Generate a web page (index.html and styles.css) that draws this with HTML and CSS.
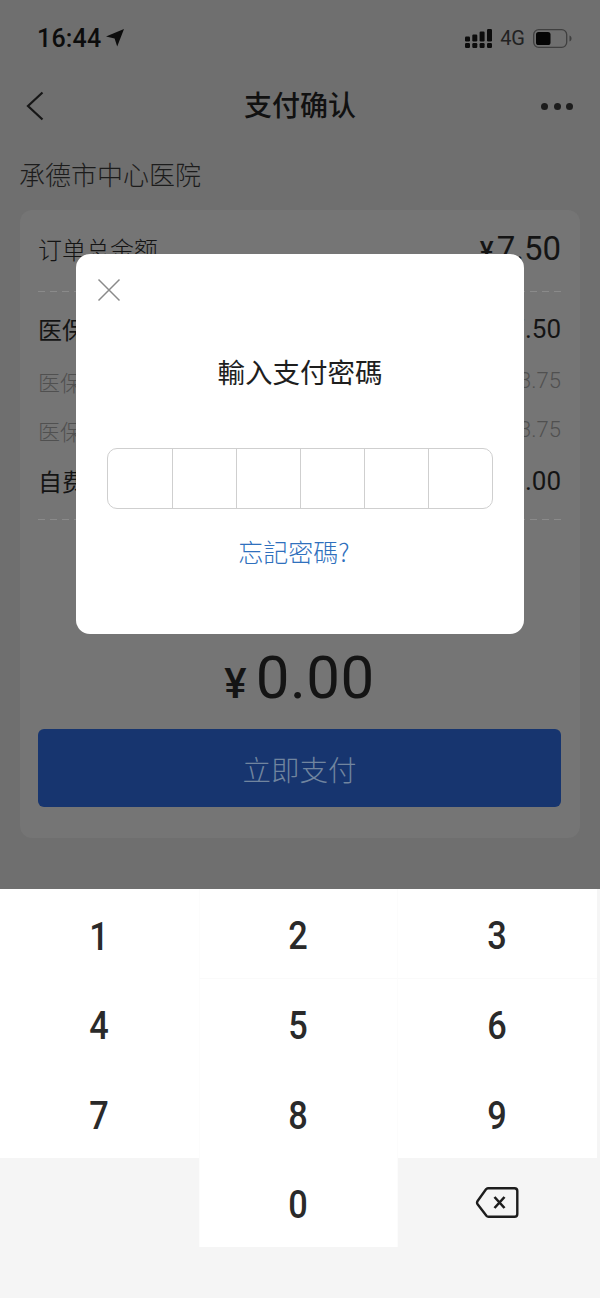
FILE: index.html
```html
<!DOCTYPE html>
<html lang="zh">
<head>
<meta charset="utf-8">
<title>支付确认</title>
<link rel="stylesheet" href="styles.css">
</head>
<body>
<div class="page">
  <header class="status">
    <div class="status-left">
      <span class="time">16:44</span>
      <svg class="arrow" viewBox="0 0 18 18" width="18" height="18"><path d="M18 0 11.200 17.500 8.600 9.600 0 7.400Z"/></svg>
    </div>
    <div class="status-right">
      <svg class="signal" viewBox="0 0 27 19" width="27" height="19">
        <g fill="#0c0c0c">
          <rect x="0" y="14" width="5" height="5" rx="1.200"/><rect x="0" y="7.500" width="5" height="5" rx="1.200"/>
          <rect x="7.300" y="14" width="5" height="5" rx="1.200"/><rect x="7.300" y="5.500" width="5" height="7" rx="1.200"/>
          <rect x="14.600" y="14" width="5" height="5" rx="1.200"/><rect x="14.600" y="2.500" width="5" height="10" rx="1.200"/>
          <rect x="22" y="14" width="5" height="5" rx="1.200"/><rect x="22" y="0" width="5" height="12.500" rx="1.200"/>
        </g>
      </svg>
      <span class="network">4G</span>
      <svg class="battery" viewBox="0 0 39 19" width="39" height="19">
        <rect x="0.700" y="0.700" width="33" height="17.600" rx="5" fill="none" stroke="#3f3f3f" stroke-width="1.300"/>
        <rect x="3" y="3" width="14.500" height="13" rx="2.600" fill="#050505"/>
        <path d="M36.500 6.500c1.500.6 2 1.800 2 3s-.5 2.400-2 3z" fill="#3f3f3f"/>
      </svg>
    </div>
  </header>

  <nav class="nav">
    <svg class="back" viewBox="0 0 18 30" width="18" height="30"><path d="M16.500 1.500 2 15l14.500 13.500" fill="none" stroke="#161616" stroke-width="2.200"/></svg>
    <h1 class="nav-title">支付确认</h1>
    <div class="more"><i></i><i></i><i></i></div>
  </nav>

  <div class="hospital">承德市中心医院</div>

  <section class="card">
    <div class="total"><span>订单总金额</span><span class="total-value"><small class="total-sign">¥</small>7.50</span></div>
    <div class="breakdown">
      <div class="row row-main"><span>医保支付</span><span class="num">¥7.50</span></div>
      <div class="row row-sub"><span>医保统筹</span><span class="num">¥3.75</span></div>
      <div class="row row-sub"><span>医保个账</span><span class="num">¥3.75</span></div>
      <div class="row row-main"><span>自费金额</span><span class="num">¥0.00</span></div>
    </div>
    <div class="due"><span class="due-sign">¥</span><span class="due-value">0.00</span></div>
    <button class="pay">立即支付</button>
  </section>

  <div class="modal">
    <svg class="close" viewBox="0 0 24 24" width="24" height="24"><path d="M1.500 1.500 22.500 22.500M22.500 1.500 1.500 22.500" stroke="#8a8a8a" stroke-width="1.500" fill="none"/></svg>
    <h2 class="modal-title">輸入支付密碼</h2>
    <div class="pin"><span></span><span></span><span></span><span></span><span></span><span></span></div>
    <a class="forgot">忘記密碼?</a>
  </div>

  <div class="keypad">
    <button class="key"><span>1</span></button>
    <button class="key key-mid key-top"><span>2</span></button>
    <button class="key key-top"><span>3</span></button>
    <button class="key"><span>4</span></button>
    <button class="key key-mid"><span>5</span></button>
    <button class="key"><span>6</span></button>
    <button class="key"><span>7</span></button>
    <button class="key key-mid"><span>8</span></button>
    <button class="key"><span>9</span></button>
    <div class="key-blank"></div>
    <button class="key key-mid"><span>0</span></button>
    <button class="key-del">
      <svg viewBox="0 0 44 33" width="44" height="33">
        <path d="M13 2.200H39.500A2.800 2.800 0 0 1 42.300 5V28A2.800 2.800 0 0 1 39.500 30.800H13.500A2.800 2.800 0 0 1 11.400 29.800L2.600 18.200A2.800 2.800 0 0 1 2.600 15L11 3.200A2.800 2.800 0 0 1 13 2.200Z" fill="none" stroke="#1d1d1d" stroke-width="2.400"/>
        <path d="M19.500 11 29.500 22M29.500 11 19.500 22" stroke="#1d1d1d" stroke-width="2.600" fill="none"/>
      </svg>
    </button>
  </div>
</div>
</body>
</html>
```

FILE: styles.css
```css
* { box-sizing: border-box; }

html, body { margin: 0; padding: 0; }

body {
  font-family: "Noto Sans CJK SC", "Noto Sans", sans-serif;
  color: #141414;
  background: #6f6f6f;
}

.page {
  position: relative;
  width: 600px;
  height: 1298px;
  overflow: hidden;
  background: #6f6f6f;
}

/* status bar */
.status {
  height: 76px;
  padding: 0 28px 0 37px;
  display: flex;
  justify-content: space-between;
  align-items: center;
}

.status-left, .status-right { display: flex; align-items: center; }

.time {
  font: 500 25px/1 Roboto, sans-serif;
  color: #0c0c0c;
  letter-spacing: .2px;
}

.arrow { margin-left: 5px; fill: #0c0c0c; }

.signal { margin-right: 8px; }

.network {
  margin-right: 8px;
  font: 400 20px/1 Roboto, sans-serif;
  color: #222;
}

/* navigation bar */
.nav {
  height: 60px;
  padding: 0 27px 0 26px;
  display: flex;
  align-items: center;
  justify-content: space-between;
  position: relative;
}

.nav-title {
  position: absolute;
  left: 0;
  right: 0;
  top: -2px;
  margin: 0;
  text-align: center;
  font-size: 28px;
  font-weight: 500;
  line-height: 60px;
  color: #111;
}

.more { display: flex; gap: 5.500px; }

.more i {
  width: 7px;
  height: 7px;
  border-radius: 50%;
  background: #1c1c1c;
}

.hospital {
  height: 74px;
  padding-left: 19px;
  font-size: 26px;
  font-weight: 300;
  line-height: 76px;
  color: #1c1c1c;
}

/* order card */
.card {
  height: 628px;
  margin: 0 20px;
  padding: 16px 19px 0 18px;
  border-radius: 12px;
  background: #757575;
}

.total {
  height: 66px;
  padding-bottom: 21px;
  display: flex;
  justify-content: space-between;
  align-items: center;
  font-size: 24px;
  font-weight: 300;
  background: repeating-linear-gradient(90deg, #8a8a8a 0 7px, transparent 7px 12px) left bottom / 100% 1px no-repeat;
}

.total-value { font: 400 33px/1 Roboto, sans-serif; }

.total-sign { margin-right: 3px; font-size: 26px; font-weight: 500; }

.breakdown {
  height: 228px;
  padding-top: 12px;
  background: repeating-linear-gradient(90deg, #8a8a8a 0 7px, transparent 7px 12px) left bottom / 100% 1px no-repeat;
}

.row {
  height: 49px;
  display: flex;
  justify-content: space-between;
  align-items: center;
}

.row-main { font-size: 24px; font-weight: 400; }

.row-main .num { font: 400 26px/1 Roboto, sans-serif; }

.row-sub { font-size: 22px; font-weight: 300; color: #505050; }

.row-sub .num { font: 300 22px/1 Roboto, sans-serif; }

.row-main + .row-sub { margin-top: 3px; }

.row-sub + .row-main { margin-top: 2px; }

.due {
  height: 209px;
  padding-top: 128px;
  display: flex;
  justify-content: center;
  align-items: baseline;
  line-height: 1;
}

.due-sign { margin-right: 9px; font: 500 42px/1 Roboto, sans-serif; color: #141414; }

.due-value { font: 400 60px/1 Roboto, sans-serif; letter-spacing: .5px; color: #141414; }

.pay {
  display: block;
  width: 100%;
  height: 78px;
  border: 0;
  border-radius: 6px;
  background: #17356f;
  color: #71859f;
  font-family: inherit;
  font-size: 28.500px;
  font-weight: 300;
}

/* password dialog */
.modal {
  position: absolute;
  left: 76px;
  top: 254px;
  width: 448px;
  height: 380px;
  padding: 25px 31px 0;
  border-radius: 14px;
  background: #fff;
  display: flex;
  flex-direction: column;
}

.close { display: block; margin: -1px 0 0 -10px; }

.modal-title {
  margin: 47px 0 0;
  text-align: center;
  font-family: "Noto Sans CJK TC", "Noto Sans", sans-serif;
  font-size: 27.500px;
  font-weight: 400;
  line-height: 44px;
  color: #1e1e1e;
}

.pin {
  height: 61px;
  margin-top: 55px;
  display: grid;
  grid-template-columns: repeat(6, 1fr);
  border: 1px solid #cfcfcf;
  border-radius: 10px;
}

.pin span { border-left: 1px solid #cfcfcf; }

.pin span:first-child { border-left: 0; }

.forgot {
  margin-top: 22px;
  padding-right: 12px;
  text-align: center;
  font-family: "Noto Sans CJK TC", "Noto Sans", sans-serif;
  font-size: 25px;
  font-weight: 300;
  line-height: 40px;
  color: #2f70bd;
}

/* numeric keypad */
.keypad {
  position: absolute;
  left: 0;
  right: 0;
  top: 889px;
  bottom: 0;
  padding-right: 3px;
  background: #f5f5f5;
  display: grid;
  grid-template-columns: repeat(3, 199px);
  grid-template-rows: repeat(4, 89.500px);
}

.key {
  padding: 7px 0 0;
  border: 0;
  background: #fff;
  font: 500 39px/1 Roboto, sans-serif;
  color: #2a2a2a;
}

.key span { display: inline-block; transform: scaleX(.88); }

.key-top { border-bottom: 1px solid #fafafa; }

.key-mid { border-left: 1px solid #fcfcfc; border-right: 1px solid #fcfcfc; }

.key-del {
  padding: 0 2px 0 0;
  border: 0;
  background: none;
  display: flex;
  align-items: center;
  justify-content: center;
}
```
